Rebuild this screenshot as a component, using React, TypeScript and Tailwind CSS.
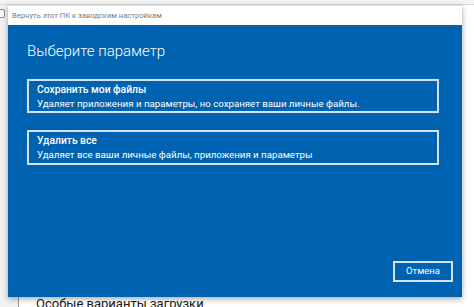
import React from "react";

export default function App() {
  const font = { fontFamily: 'Roboto, "Noto Sans", sans-serif' };
  return (
    <div className="relative w-[474px] h-[307px] overflow-hidden bg-white" style={font}>
      {/* background settings window */}
      <div className="absolute inset-0 flex">
        <div className="w-[19px] h-full bg-[#f2f2f2] border-r border-[#9a9a9a]" />
        <div className="flex-1 flex flex-col justify-end">
          <div className="pl-[17px] text-[13px] leading-[16px] text-[#1a1a1a] translate-y-[5px]">
            Особые варианты загрузки
          </div>
        </div>
      </div>
      <div className="absolute left-0 top-0 w-full h-[5px] bg-[#f4f4f4] border-b border-[#dadada]" />
      <div className="absolute left-[-6px] top-[9px] w-[11px] h-[9px] rounded-[2px] border border-[#8a8a8a] bg-white" />

      {/* dialog */}
      <div className="absolute left-[8px] top-[5px] w-[454px] h-[292px] flex flex-col shadow-[0_2px_6px_rgba(0,0,0,0.35)]">
        <div className="h-[20px] bg-white flex items-center pl-[4px] text-[7.6px] text-[#7d7d7d] border-t border-[#e0e0e0]">
          Вернуть этот ПК к заводским настройкам
        </div>
        <div className="flex-1 bg-[#0063b1] flex flex-col pl-[19px] pr-[23px] pt-[14px]">
          <div className="text-[15px] leading-[24px] font-light text-white">Выберите параметр</div>
          <div className="mt-[16px] border-2 border-[#d4e4f4] pl-[8px] pt-[2px] pb-[1px] text-white">
            <div className="text-[10.3px] leading-[13px] font-medium">Сохранить мои файлы</div>
            <div className="text-[9.7px] leading-[13px] mt-[1px]">
              Удаляет приложения и параметры, но сохраняет ваши личные файлы.
            </div>
          </div>
          <div className="mt-[17px] border-2 border-[#d4e4f4] pl-[8px] pt-[2px] pb-[2px] text-white">
            <div className="text-[10.3px] leading-[13px] font-medium">Удалить все</div>
            <div className="text-[9.7px] leading-[13px] mt-[1px]">
              Удаляет все ваши личные файлы, приложения и параметры
            </div>
          </div>
          <div className="flex-1" />
          <div className="flex justify-end mb-[15px] -mr-[14px]">
            <div className="w-[60px] h-[21px] border-2 border-[#d4e4f4] flex items-center justify-center text-[9.5px] text-white">
              Отмена
            </div>
          </div>
        </div>
      </div>
    </div>
  );
}
